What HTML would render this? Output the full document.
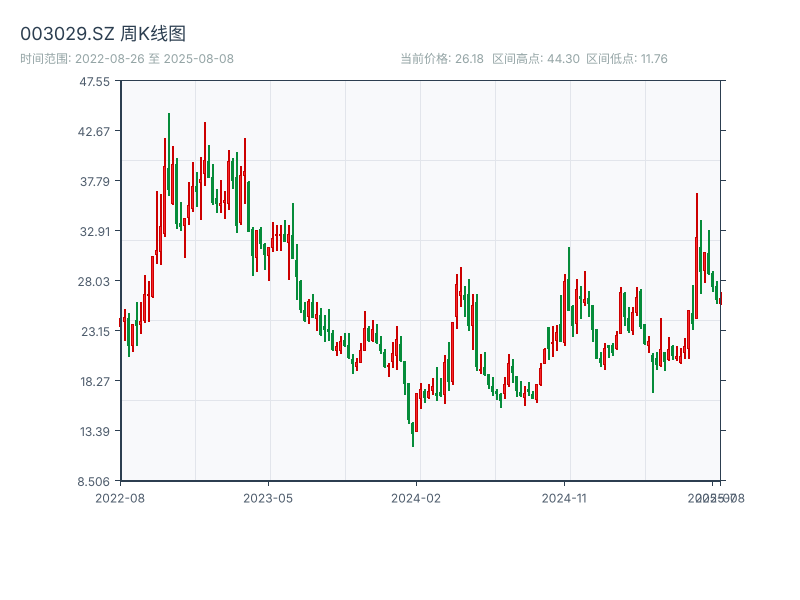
<!DOCTYPE html>
<html><head><meta charset="utf-8"><style>
html,body{margin:0;padding:0;background:#fff;width:800px;height:600px;overflow:hidden}
svg{display:block}
text{font-family:"Inter","WenQuanYi Zen Hei",sans-serif;text-rendering:geometricPrecision}
</style></head><body>
<svg width="800" height="600" viewBox="0 0 800 600" xmlns="http://www.w3.org/2000/svg" shape-rendering="crispEdges">
<rect width="800" height="600" fill="#fff"/>
<text x="20" y="40" font-size="18" fill="#2c3e50">003029.SZ 周K线图</text>
<text x="20" y="63" font-size="12" fill="#95a5a6">时间范围: 2022-08-26 至 2025-08-08</text>
<text x="400" y="63" font-size="12" fill="#95a5a6">当前价格: 26.18</text>
<text x="492" y="63" font-size="12" fill="#95a5a6">区间高点: 44.30</text>
<text x="586" y="63" font-size="12" fill="#95a5a6">区间低点: 11.76</text>
<rect x="120" y="80" width="600" height="400" fill="#f8f9fb"/>
<path fill="#e2e5eb" d="M195 80h1v400h-1zM270 80h1v400h-1zM345 80h1v400h-1zM420 80h1v400h-1zM495 80h1v400h-1zM570 80h1v400h-1zM645 80h1v400h-1zM120 160h600v1h-600zM120 240h600v1h-600zM120 320h600v1h-600zM120 400h600v1h-600z"/>
<path fill="#068c3a" d="M128 313h2V357h-2zM127 318h3V346h-3zM136 302h2V346h-2zM135 320h3V326h-3zM168 113h2V196h-2zM167 168h3V190h-3zM176 158h2V229h-2zM175 164h3V224h-3zM180 202h2V231h-2zM179 223h3V227h-3zM196 172h2V207h-2zM195 186h3V192h-3zM208 145h2V178h-2zM207 161h3V178h-3zM212 164h2V205h-2zM211 177h3V203h-3zM216 189h2V213h-2zM215 198h3V204h-3zM232 158h2V189h-2zM231 161h3V181h-3zM236 152h2V233h-2zM235 177h3V226h-3zM248 181h2V232h-2zM247 182h3V232h-3zM252 227h2V276h-2zM251 229h3V256h-3zM260 227h2V249h-2zM259 229h3V244h-3zM264 243h2V270h-2zM263 244h3V255h-3zM284 220h2V242h-2zM283 234h3V242h-3zM292 203h2V259h-2zM291 235h3V259h-3zM296 244h2V300h-2zM295 260h3V277h-3zM300 280h2V313h-2zM299 281h3V310h-3zM304 302h2V322h-2zM303 310h3V321h-3zM312 294h2V318h-2zM311 302h3V318h-3zM320 308h2V336h-2zM319 315h3V335h-3zM324 315h2V342h-2zM323 326h3V330h-3zM328 309h2V341h-2zM327 329h3V332h-3zM332 330h2V351h-2zM331 333h3V350h-3zM344 333h2V347h-2zM343 340h3V346h-3zM348 333h2V359h-2zM347 345h3V358h-3zM352 354h2V374h-2zM351 359h3V364h-3zM368 326h2V342h-2zM367 328h3V341h-3zM376 324h2V344h-2zM375 333h3V343h-3zM380 336h2V354h-2zM379 344h3V351h-3zM384 349h2V368h-2zM383 352h3V367h-3zM400 336h2V362h-2zM399 344h3V361h-3zM404 361h2V395h-2zM403 361h3V384h-3zM408 383h2V424h-2zM407 383h3V420h-3zM412 422h2V447h-2zM411 423h3V434h-3zM424 389h2V403h-2zM423 391h3V398h-3zM436 367h2V401h-2zM435 393h3V396h-3zM440 378h2V397h-2zM439 392h3V396h-3zM448 342h2V391h-2zM447 359h3V382h-3zM464 286h2V317h-2zM463 295h3V300h-3zM468 279h2V331h-2zM467 294h3V326h-3zM476 294h2V371h-2zM475 302h3V367h-3zM484 352h2V376h-2zM483 367h3V375h-3zM488 374h2V389h-2zM487 374h3V385h-3zM492 377h2V396h-2zM491 386h3V392h-3zM496 389h2V400h-2zM495 391h3V394h-3zM500 393h2V408h-2zM499 394h3V401h-3zM512 359h2V383h-2zM511 366h3V373h-3zM516 376h2V397h-2zM515 376h3V391h-3zM520 381h2V397h-2zM519 392h3V396h-3zM528 382h2V396h-2zM527 389h3V392h-3zM532 391h2V399h-2zM531 394h3V399h-3zM548 327h2V360h-2zM547 327h3V349h-3zM560 295h2V342h-2zM559 324h3V342h-3zM568 247h2V311h-2zM567 279h3V311h-3zM572 305h2V337h-2zM571 306h3V326h-3zM580 286h2V319h-2zM579 296h3V299h-3zM588 291h2V317h-2zM587 298h3V304h-3zM592 305h2V342h-2zM591 305h3V330h-3zM596 329h2V359h-2zM595 329h3V359h-3zM600 352h2V367h-2zM599 358h3V363h-3zM608 345h2V358h-2zM607 345h3V348h-3zM612 343h2V356h-2zM611 345h3V353h-3zM624 292h2V326h-2zM623 293h3V317h-3zM628 307h2V333h-2zM627 318h3V331h-3zM640 289h2V329h-2zM639 291h3V327h-3zM644 324h2V345h-2zM643 324h3V344h-3zM652 353h2V393h-2zM651 355h3V362h-3zM656 352h2V370h-2zM655 358h3V365h-3zM664 352h2V371h-2zM663 352h3V362h-3zM672 345h2V360h-2zM671 346h3V356h-3zM692 285h2V330h-2zM691 313h3V324h-3zM700 220h2V294h-2zM699 247h3V272h-3zM708 230h2V275h-2zM707 253h3V274h-3zM712 271h2V292h-2zM711 273h3V287h-3zM716 281h2V304h-2zM715 286h3V300h-3z"/>
<path fill="#cc0000" d="M119 318h3V327h-3zM124 309h2V341h-2zM123 317h3V322h-3zM132 324h2V352h-2zM131 324h3V346h-3zM140 302h2V334h-2zM139 321h3V325h-3zM144 275h2V323h-2zM143 294h3V321h-3zM148 281h2V322h-2zM147 294h3V296h-3zM152 256h2V298h-2zM151 256h3V297h-3zM156 191h2V264h-2zM155 250h3V255h-3zM160 194h2V265h-2zM159 226h3V252h-3zM164 138h2V237h-2zM163 166h3V234h-3zM172 146h2V205h-2zM171 164h3V204h-3zM184 218h2V258h-2zM183 218h3V226h-3zM188 182h2V225h-2zM187 205h3V218h-3zM192 162h2V212h-2zM191 186h3V209h-3zM200 157h2V220h-2zM199 179h3V183h-3zM204 122h2V186h-2zM203 160h3V174h-3zM220 180h2V213h-2zM219 203h3V206h-3zM224 191h2V219h-2zM223 200h3V203h-3zM228 150h2V210h-2zM227 161h3V204h-3zM240 166h2V225h-2zM239 175h3V223h-3zM244 138h2V204h-2zM243 171h3V176h-3zM256 230h2V272h-2zM255 230h3V258h-3zM268 247h2V281h-2zM267 247h3V256h-3zM272 222h2V252h-2zM271 238h3V248h-3zM276 225h2V251h-2zM275 234h3V236h-3zM280 225h2V251h-2zM279 234h3V236h-3zM288 225h2V280h-2zM287 234h3V243h-3zM308 299h2V324h-2zM307 301h3V317h-3zM316 302h2V331h-2zM315 314h3V319h-3zM336 342h2V356h-2zM335 346h3V351h-3zM340 336h2V354h-2zM339 341h3V351h-3zM356 358h2V371h-2zM355 362h3V367h-3zM360 343h2V363h-2zM359 350h3V363h-3zM364 311h2V351h-2zM363 328h3V351h-3zM372 320h2V342h-2zM371 329h3V341h-3zM388 363h2V377h-2zM387 365h3V367h-3zM392 342h2V368h-2zM391 353h3V362h-3zM396 326h2V370h-2zM395 339h3V356h-3zM416 393h2V432h-2zM415 393h3V432h-3zM420 383h2V409h-2zM419 389h3V399h-3zM428 384h2V399h-2zM427 391h3V398h-3zM432 378h2V395h-2zM431 386h3V391h-3zM444 355h2V404h-2zM443 362h3V395h-3zM452 322h2V385h-2zM451 322h3V382h-3zM456 274h2V329h-2zM455 284h3V317h-3zM460 267h2V307h-2zM459 291h3V296h-3zM472 294h2V350h-2zM471 305h3V326h-3zM480 354h2V374h-2zM479 369h3V371h-3zM504 377h2V399h-2zM503 384h3V394h-3zM508 354h2V387h-2zM507 363h3V385h-3zM524 386h2V406h-2zM523 393h3V398h-3zM536 384h2V403h-2zM535 384h3V400h-3zM540 363h2V386h-2zM539 368h3V385h-3zM544 348h2V364h-2zM543 349h3V364h-3zM552 326h2V357h-2zM551 342h3V344h-3zM556 325h2V351h-2zM555 332h3V341h-3zM564 274h2V346h-2zM563 281h3V343h-3zM576 279h2V334h-2zM575 289h3V324h-3zM584 271h2V306h-2zM583 299h3V303h-3zM604 343h2V370h-2zM603 348h3V365h-3zM616 331h2V350h-2zM615 335h3V349h-3zM620 287h2V334h-2zM619 292h3V334h-3zM632 307h2V335h-2zM631 312h3V331h-3zM636 287h2V316h-2zM635 297h3V313h-3zM648 336h2V353h-2zM647 341h3V346h-3zM660 318h2V367h-2zM659 349h3V366h-3zM668 337h2V361h-2zM667 349h3V360h-3zM676 346h2V361h-2zM675 356h3V359h-3zM680 348h2V364h-2zM679 356h3V363h-3zM684 338h2V359h-2zM683 346h3V353h-3zM688 310h2V359h-2zM687 310h3V349h-3zM696 193h2V319h-2zM695 237h3V319h-3zM704 252h2V283h-2zM703 252h3V271h-3zM720 292h2V305h-2zM719 298h3V304h-3z"/>
<path fill="#f5262b" d="M124 318h1V321h-1zM132 325h1V345h-1zM140 322h1V324h-1zM144 295h1V320h-1zM152 257h1V296h-1zM156 251h1V254h-1zM160 227h1V251h-1zM164 167h1V233h-1zM172 165h1V203h-1zM184 219h1V225h-1zM188 206h1V217h-1zM192 187h1V208h-1zM200 180h1V182h-1zM204 161h1V173h-1zM220 204h1V205h-1zM224 201h1V202h-1zM228 162h1V203h-1zM240 176h1V222h-1zM244 172h1V175h-1zM256 231h1V257h-1zM268 248h1V255h-1zM272 239h1V247h-1zM288 235h1V242h-1zM308 302h1V316h-1zM316 315h1V318h-1zM336 347h1V350h-1zM340 342h1V350h-1zM356 363h1V366h-1zM360 351h1V362h-1zM364 329h1V350h-1zM372 330h1V340h-1zM392 354h1V361h-1zM396 340h1V355h-1zM416 394h1V431h-1zM420 390h1V398h-1zM428 392h1V397h-1zM432 387h1V390h-1zM444 363h1V394h-1zM452 323h1V381h-1zM456 285h1V316h-1zM460 292h1V295h-1zM472 306h1V325h-1zM504 385h1V393h-1zM508 364h1V384h-1zM524 394h1V397h-1zM536 385h1V399h-1zM540 369h1V384h-1zM544 350h1V363h-1zM556 333h1V340h-1zM564 282h1V342h-1zM576 290h1V323h-1zM584 300h1V302h-1zM604 349h1V364h-1zM616 336h1V348h-1zM620 293h1V333h-1zM632 313h1V330h-1zM636 298h1V312h-1zM648 342h1V345h-1zM660 350h1V365h-1zM668 350h1V359h-1zM676 357h1V358h-1zM680 357h1V362h-1zM684 347h1V352h-1zM688 311h1V348h-1zM696 238h1V318h-1zM704 253h1V270h-1z"/>
<path fill="#2c3e50" d="M120 80h2v402h-2zM120 80h601v1h-601zM720 80h1v401h-1zM120 480h601v2h-601zM115 80h5v1h-5zM115 130h5v1h-5zM115 180h5v1h-5zM115 230h5v1h-5zM115 280h5v1h-5zM115 330h5v1h-5zM115 380h5v1h-5zM115 430h5v1h-5zM115 480h5v1h-5zM721 80h5v1h-5zM721 130h5v1h-5zM721 180h5v1h-5zM721 230h5v1h-5zM721 280h5v1h-5zM721 330h5v1h-5zM721 380h5v1h-5zM721 430h5v1h-5zM721 480h5v1h-5zM120 482h1v4h-1zM268 482h1v4h-1zM416 482h1v4h-1zM564 482h1v4h-1zM712 482h1v4h-1zM720 482h1v4h-1z"/>
<g font-size="12" fill="#4e5c6c" text-anchor="end">
<text x="110" y="86">47.55</text>
<text x="110" y="136">42.67</text>
<text x="110" y="186">37.79</text>
<text x="110" y="236">32.91</text>
<text x="110" y="286">28.03</text>
<text x="110" y="336">23.15</text>
<text x="110" y="386">18.27</text>
<text x="110" y="436">13.39</text>
<text x="110" y="486">8.506</text>
</g>
<g font-size="12" fill="#4e5c6c" text-anchor="middle">
<text x="120" y="502.5">2022-08</text>
<text x="268" y="502.5">2023-05</text>
<text x="416" y="502.5">2024-02</text>
<text x="564" y="502.5">2024-11</text>
<text x="712" y="502.5">2025-07</text>
<text x="720" y="502.5">2025-08</text>
</g>
</svg>
</body></html>
